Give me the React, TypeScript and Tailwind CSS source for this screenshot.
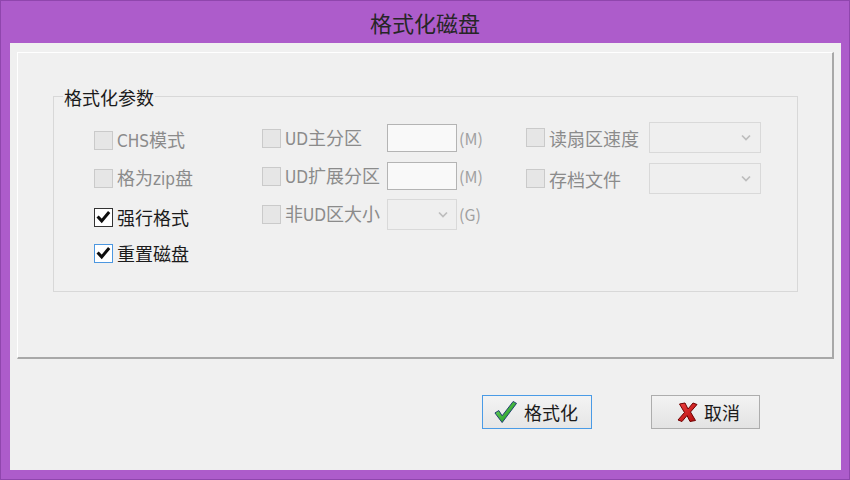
import React from 'react';

type BoxState = 'disabled' | 'checked' | 'focused';

const font = "font-['Noto_Sans_CJK_SC','Noto_Sans',sans-serif]";

function Tick() {
  return (
    <svg width="19" height="19" viewBox="0 0 19 19" className="absolute -inset-[1px]">
      <path d="M4.6 9.6 L7.7 12.9 L14.2 5.2" fill="none" stroke="#0d0d0d" strokeWidth="3" strokeLinecap="square" />
    </svg>
  );
}

function CheckBox({ state }: { state: BoxState }) {
  if (state === 'disabled') {
    return <div className="relative w-[19px] h-[19px] shrink-0 border border-[#cacaca] bg-[#e6e6e6]" />;
  }
  return (
    <div
      className={
        state === 'focused'
          ? 'relative w-[19px] h-[19px] shrink-0 border border-[#4c97e0] bg-white'
          : 'relative w-[19px] h-[19px] shrink-0 border border-[#333333] bg-white'
      }
    >
      <Tick />
    </div>
  );
}

function Chevron() {
  return (
    <svg width="10" height="7" viewBox="0 0 10 7">
      <path d="M1 1.5 L5 5.5 L9 1.5" fill="none" stroke="#bdbdbd" strokeWidth="1.7" />
    </svg>
  );
}

// latin runs use a narrow face, as in the reference
function Label({ text }: { text: string }) {
  const parts = text.split(/([A-Za-z]+)/).filter(Boolean);
  return (
    <>
      {parts.map((p, i) =>
        /^[A-Za-z]+$/.test(p) ? (
          <span key={i} className="font-['Liberation_Sans_Narrow','DejaVu_Sans_Condensed',sans-serif] text-[17px]">
            {p}
          </span>
        ) : (
          <span key={i}>{p}</span>
        )
      )}
    </>
  );
}

function Check({ label, state }: { label: string; state: BoxState }) {
  return (
    <div className="flex items-center">
      <CheckBox state={state} />
      <span
        className={
          state === 'disabled'
            ? 'ml-[4px] text-[18px] leading-none text-[#8b8b8b]'
            : 'ml-[4px] text-[18px] leading-none text-[#1b1b1b]'
        }
      >
        <Label text={label} />
      </span>
    </div>
  );
}

function Unit({ text }: { text: string }) {
  return <span className="ml-[2px] text-[16px] leading-none text-[#a0a0a0]">{text}</span>;
}

function OkIcon() {
  return (
    <svg width="23" height="24" viewBox="0 0 24 24">
      <defs>
        <linearGradient id="okg" x1="0" y1="0" x2="1" y2="1">
          <stop offset="0" stopColor="#7be06a" />
          <stop offset="1" stopColor="#0d8a12" />
        </linearGradient>
      </defs>
      <path d="M1 13 L5 10.5 L8.5 16 L20 1 L23.5 3 L8.5 23 Z" fill="url(#okg)" stroke="#1d3a70" strokeWidth="1" strokeLinejoin="round" />
    </svg>
  );
}

function CancelIcon() {
  return (
    <svg width="21" height="20" viewBox="0 0 21 20">
      <defs>
        <linearGradient id="xg" x1="0" y1="0" x2="1" y2="1">
          <stop offset="0" stopColor="#f04040" />
          <stop offset="1" stopColor="#b00a0a" />
        </linearGradient>
      </defs>
      <path
        d="M2.5 2 L8 1 L11 7 L16 1 L20 2.5 L13.5 10 L18.5 18.5 L13 19.5 L10 13.5 L5 19.5 L1 18 L7.5 10.5 Z"
        fill="url(#xg)"
        stroke="#6e0000"
        strokeWidth="1"
        strokeLinejoin="round"
      />
    </svg>
  );
}

export default function App() {
  return (
    <div className={`w-[850px] h-[480px] bg-[#ad5ccb] border border-[#8f46ad] flex flex-col ${font}`}>
      {/* Title bar */}
      <div className="h-[42px] flex items-center justify-center text-[22px] text-[#262626]">格式化磁盘</div>

      {/* Client area */}
      <div className="ml-[9px] mr-[8px] mb-[9px] flex-1 bg-[#f0f0f0] pt-[9px] px-[7px] flex flex-col">
        <div className="h-[307px] border-t border-l border-t-white border-l-white border-r-2 border-b-2 border-r-[#a8a8a8] border-b-[#a8a8a8] pt-[43px] pl-[35px] pr-[34px]">
          <div className="relative h-[196px] border border-[#d8d8d8] flex">
            <span className="absolute -top-[10px] left-[9px] px-[1px] bg-[#f0f0f0] text-[18px] leading-[20px] text-[#1b1b1b]">
              格式化参数
            </span>

            {/* Column 1 */}
            <div className="w-[208px] pl-[40px] pt-[28px] flex flex-col">
              <div className="h-[30px] flex items-center">
                <Check label="CHS模式" state="disabled" />
              </div>
              <div className="h-[30px] mt-[8px] flex items-center">
                <Check label="格为zip盘" state="disabled" />
              </div>
              <div className="h-[30px] mt-[9px] flex items-center">
                <Check label="强行格式" state="checked" />
              </div>
              <div className="h-[30px] mt-[6px] flex items-center">
                <Check label="重置磁盘" state="focused" />
              </div>
            </div>

            {/* Column 2 */}
            <div className="w-[264px] pt-[26px] flex flex-col gap-[8px]">
              <div className="h-[30px] flex items-center">
                <div className="w-[125px]">
                  <Check label="UD主分区" state="disabled" />
                </div>
                <div className="w-[70px] h-[28px] border border-[#b4b4b4] bg-[#f9f9f9]" />
                <Unit text="(M)" />
              </div>
              <div className="h-[30px] flex items-center">
                <div className="w-[125px]">
                  <Check label="UD扩展分区" state="disabled" />
                </div>
                <div className="w-[70px] h-[28px] border border-[#b4b4b4] bg-[#f9f9f9]" />
                <Unit text="(M)" />
              </div>
              <div className="h-[30px] flex items-center">
                <div className="w-[125px]">
                  <Check label="非UD区大小" state="disabled" />
                </div>
                <div className="w-[70px] h-[31px] border border-[#d9d9d9] bg-[#efefef] flex items-center justify-end pr-[8px]">
                  <Chevron />
                </div>
                <Unit text="(G)" />
              </div>
            </div>

            {/* Column 3 */}
            <div className="pt-[25px] flex flex-col gap-[10px]">
              <div className="h-[31px] flex items-center">
                <div className="w-[123px]">
                  <Check label="读扇区速度" state="disabled" />
                </div>
                <div className="w-[112px] h-[31px] border border-[#d9d9d9] bg-[#efefef] flex items-center justify-end pr-[9px]">
                  <Chevron />
                </div>
              </div>
              <div className="h-[31px] flex items-center">
                <div className="w-[123px]">
                  <Check label="存档文件" state="disabled" />
                </div>
                <div className="w-[112px] h-[31px] border border-[#d9d9d9] bg-[#efefef] flex items-center justify-end pr-[9px]">
                  <Chevron />
                </div>
              </div>
            </div>
          </div>
        </div>

        {/* Buttons */}
        <div className="mt-[36px] flex justify-end gap-[59px] pr-[74px]">
          <button className="w-[110px] h-[34px] border border-[#4a9be6] bg-gradient-to-b from-[#f3f3f3] to-[#e6e6e6] flex items-center justify-center gap-[7px] pr-[2px] text-[18px] leading-none text-[#1b1b1b]">
            <OkIcon />
            <span>格式化</span>
          </button>
          <button className="w-[109px] h-[34px] border border-[#adadad] bg-gradient-to-b from-[#f3f3f3] to-[#e3e3e3] flex items-center justify-center gap-[6px] pl-[6px] text-[18px] leading-none text-[#1b1b1b]">
            <CancelIcon />
            <span>取消</span>
          </button>
        </div>
      </div>
    </div>
  );
}
